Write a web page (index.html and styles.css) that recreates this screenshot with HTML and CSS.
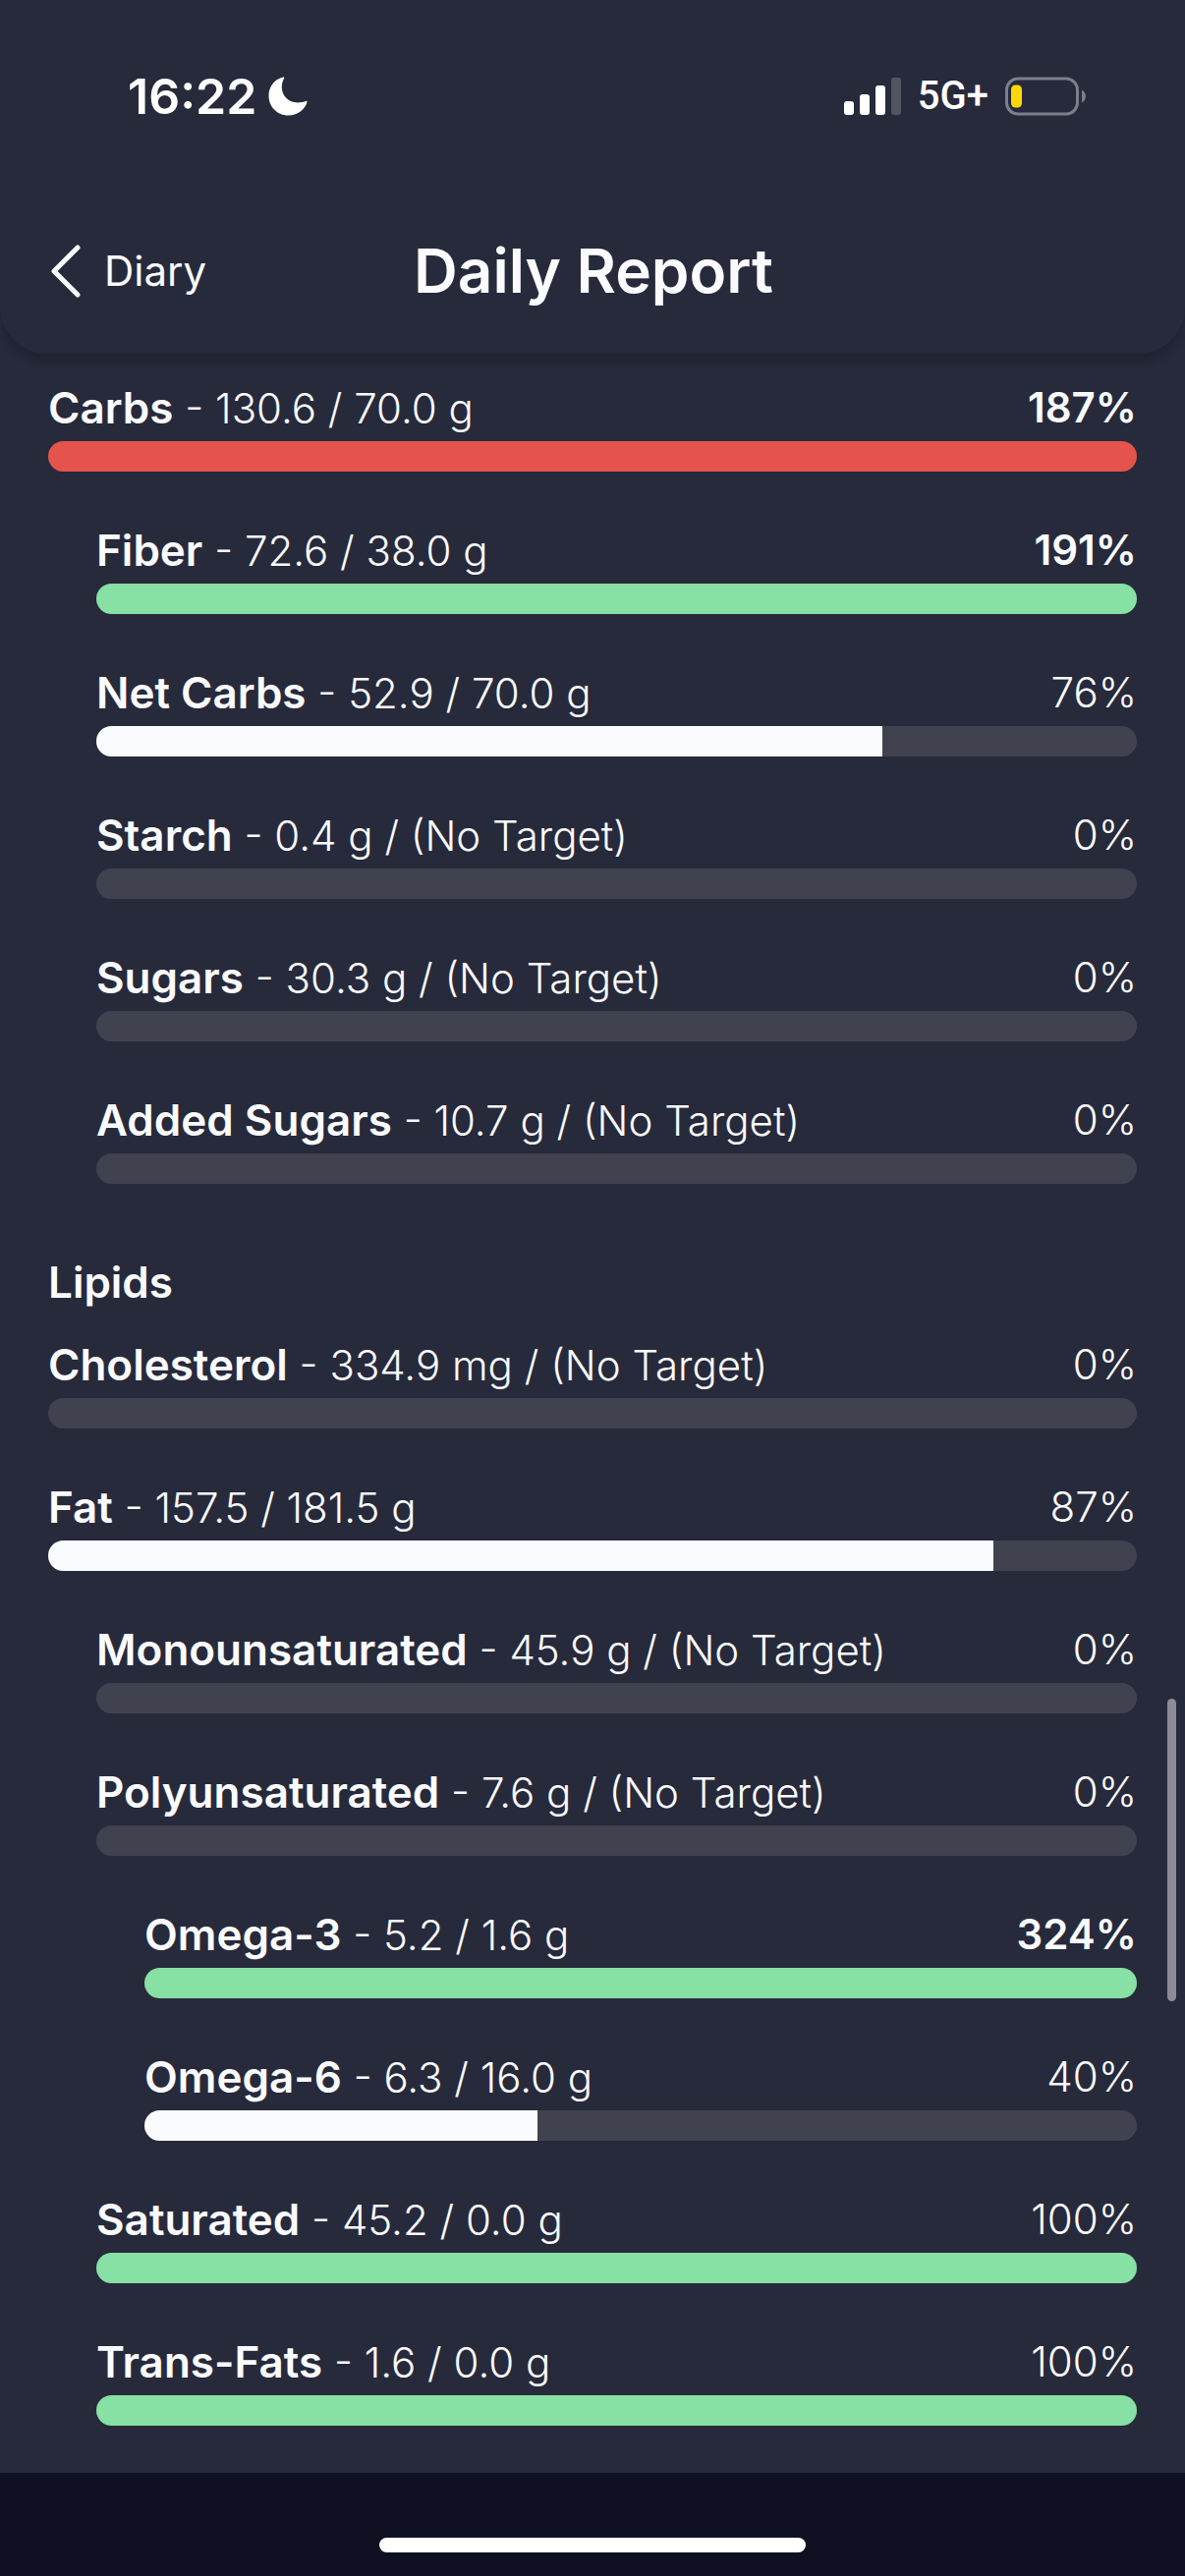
FILE: index.html
```html
<!DOCTYPE html>
<html lang="en">
<head>
  <meta charset="UTF-8">
  <meta name="viewport" content="width=device-width, initial-scale=1">
  <title>Daily Report</title>
  <link rel="stylesheet" href="styles.css">
</head>
<body>
  <header class="header">
    <div class="status-bar">
      <div class="status-left">
        <span class="time">16:22</span>
        <svg class="moon" width="40" height="40" viewBox="0 0 40 40" aria-hidden="true">
          <path d="M15 0.5C5.5 3 0.5 11 0.5 19.5C0.5 31 9.500 39.500 20.500 39.500C29.500 39.500 37 34 39.500 26C39.800 25 39 24.600 38 25C35.500 26 33 26.400 30 26.400C20.500 26.400 13.800 19.500 13.800 10.500C13.800 7.500 14.500 4.500 16 2C16.600 0.900 16 0.200 15 0.500Z" fill="#fff"/>
        </svg>
      </div>
      <div class="status-right">
        <svg width="58" height="38" viewBox="0 0 58 38" fill="#fff" aria-hidden="true">
          <rect x="0" y="24" width="10" height="14" rx="3"/>
          <rect x="16" y="17" width="10" height="21" rx="3"/>
          <rect x="32" y="8" width="10" height="30" rx="3"/>
          <rect x="48" y="0" width="10" height="38" rx="3" opacity="0.2"/>
        </svg>
        <span class="network">5G+</span>
        <svg width="82" height="40" viewBox="0 0 82 40" aria-hidden="true">
          <rect x="1.500" y="2" width="72" height="36" rx="11.500" fill="none" stroke="#7d7f89" stroke-width="3"/>
          <path d="M78 13.500C83.300 16.500 83.300 23.500 78 26.500Z" fill="#7d7f89"/>
          <rect x="6" y="8.500" width="11" height="23" rx="4.500" fill="#ffd60a"/>
        </svg>
      </div>
    </div>
    <nav class="nav">
      <a class="back" href="#">
        <svg width="30" height="54" viewBox="0 0 30 54" fill="none" stroke="#fafbff" stroke-width="5" stroke-linecap="round" stroke-linejoin="round" aria-hidden="true">
          <path d="M27 3L3 27L27 51"/>
        </svg>
        Diary
      </a>
      <h1 class="title">Daily Report</h1>
    </nav>
  </header>

  <main class="report">
    <section class="group">
      <div class="nutrient">
        <div class="label"><span><b class="name">Carbs</b> - 130.6 / 70.0 g</span><b>187%</b></div>
        <div class="bar"><div class="fill over" style="width: 100%"></div></div>
      </div>
      <div class="nutrient level-1">
        <div class="label"><span><b class="name">Fiber</b> - 72.6 / 38.0 g</span><b>191%</b></div>
        <div class="bar"><div class="fill met" style="width: 100%"></div></div>
      </div>
      <div class="nutrient level-1">
        <div class="label"><span><b class="name">Net Carbs</b> - 52.9 / 70.0 g</span><span>76%</span></div>
        <div class="bar"><div class="fill" style="width: 75.5%"></div></div>
      </div>
      <div class="nutrient level-1">
        <div class="label"><span><b class="name">Starch</b> - 0.4 g / (No Target)</span><span>0%</span></div>
        <div class="bar"></div>
      </div>
      <div class="nutrient level-1">
        <div class="label"><span><b class="name">Sugars</b> - 30.3 g / (No Target)</span><span>0%</span></div>
        <div class="bar"></div>
      </div>
      <div class="nutrient level-1">
        <div class="label"><span><b class="name">Added Sugars</b> - 10.7 g / (No Target)</span><span>0%</span></div>
        <div class="bar"></div>
      </div>
    </section>

    <section class="group">
      <h2 class="group-title">Lipids</h2>
      <div class="nutrient">
        <div class="label"><span><b class="name">Cholesterol</b> - 334.9 mg / (No Target)</span><span>0%</span></div>
        <div class="bar"></div>
      </div>
      <div class="nutrient">
        <div class="label"><span><b class="name">Fat</b> - 157.5 / 181.5 g</span><span>87%</span></div>
        <div class="bar"><div class="fill" style="width: 86.8%"></div></div>
      </div>
      <div class="nutrient level-1">
        <div class="label"><span><b class="name">Monounsaturated</b> - 45.9 g / (No Target)</span><span>0%</span></div>
        <div class="bar"></div>
      </div>
      <div class="nutrient level-1">
        <div class="label"><span><b class="name">Polyunsaturated</b> - 7.6 g / (No Target)</span><span>0%</span></div>
        <div class="bar"></div>
      </div>
      <div class="nutrient level-2">
        <div class="label"><span><b class="name">Omega-3</b> - 5.2 / 1.6 g</span><b>324%</b></div>
        <div class="bar"><div class="fill met" style="width: 100%"></div></div>
      </div>
      <div class="nutrient level-2">
        <div class="label"><span><b class="name">Omega-6</b> - 6.3 / 16.0 g</span><span>40%</span></div>
        <div class="bar"><div class="fill" style="width: 39.6%"></div></div>
      </div>
      <div class="nutrient level-1">
        <div class="label"><span><b class="name">Saturated</b> - 45.2 / 0.0 g</span><span>100%</span></div>
        <div class="bar"><div class="fill met" style="width: 100%"></div></div>
      </div>
      <div class="nutrient level-1">
        <div class="label"><span><b class="name">Trans-Fats</b> - 1.6 / 0.0 g</span><span>100%</span></div>
        <div class="bar"><div class="fill met" style="width: 100%"></div></div>
      </div>
    </section>
    <div class="scroll-thumb"></div>
  </main>

  <footer class="footer">
    <div class="home-indicator"></div>
  </footer>
</body>
</html>
```
FILE: styles.css
```css
* {
  box-sizing: border-box;
}

body {
  margin: 0;
  min-height: 100vh;
  display: flex;
  flex-direction: column;
  background-color: #272a3b;
  color: #fafbff;
  font-family: Inter, sans-serif;
  font-size: 42px;
  font-weight: 300;
  line-height: 52px;
}

/* header */
.header {
  padding: 68px 50px 42px 52px;
  border-radius: 0 0 48px 48px;
  box-shadow: 0 10px 6px rgba(0, 0, 0, 0.15);
}

.status-bar {
  display: flex;
  justify-content: space-between;
  align-items: center;
  height: 60px;
  padding: 0 51px 0 78px;
  color: #fff;
}

.status-left {
  display: flex;
  align-items: center;
  gap: 12px;
}

.status-right {
  display: flex;
  align-items: center;
  gap: 17px;
}

.time {
  font-size: 50px;
  font-weight: 600;
}

.network {
  font-family: Roboto, sans-serif;
  font-size: 40px;
  font-weight: 500;
}

.nav {
  display: grid;
  grid-template-columns: 1fr auto 1fr;
  align-items: center;
  height: 84px;
  margin-top: 106px;
}

.back {
  display: flex;
  align-items: center;
  gap: 24px;
  color: inherit;
  font-weight: 400;
  text-decoration: none;
}

.title {
  margin: 0;
  font-size: 62px;
  font-weight: 600;
  line-height: 72px;
}

/* nutrients */
.report {
  position: relative;
  flex: 1;
  padding: 29px 49px 48px;
}

.group-title {
  margin: 74px 0 32px;
  font-size: 44px;
  font-weight: 600;
}

.nutrient + .nutrient {
  margin-top: 54px;
}

.level-1 {
  padding-left: 49px;
}

.level-2 {
  padding-left: 98px;
}

.label {
  display: flex;
  justify-content: space-between;
  height: 52px;
  margin-bottom: 8px;
}

.label b {
  font-weight: 600;
}

.label .name {
  font-size: 44px;
}

.bar {
  height: 31px;
  border-radius: 16px;
  background-color: #41424f;
  overflow: hidden;
}

.fill {
  height: 100%;
  background-color: #fafbff;
}

.fill.met {
  background-color: #87e0a4;
}

.fill.over {
  background-color: #e5544c;
}

.scroll-thumb {
  position: absolute;
  top: 1369px;
  right: 9px;
  width: 9px;
  height: 308px;
  border-radius: 5px;
  background-color: #8b8c97;
}

/* bottom */
.footer {
  display: flex;
  justify-content: center;
  align-items: flex-end;
  height: 105px;
  padding-bottom: 24px;
  background-color: #0f1021;
}

.home-indicator {
  width: 36%;
  height: 15px;
  border-radius: 8px;
  background-color: #fff;
}
```
